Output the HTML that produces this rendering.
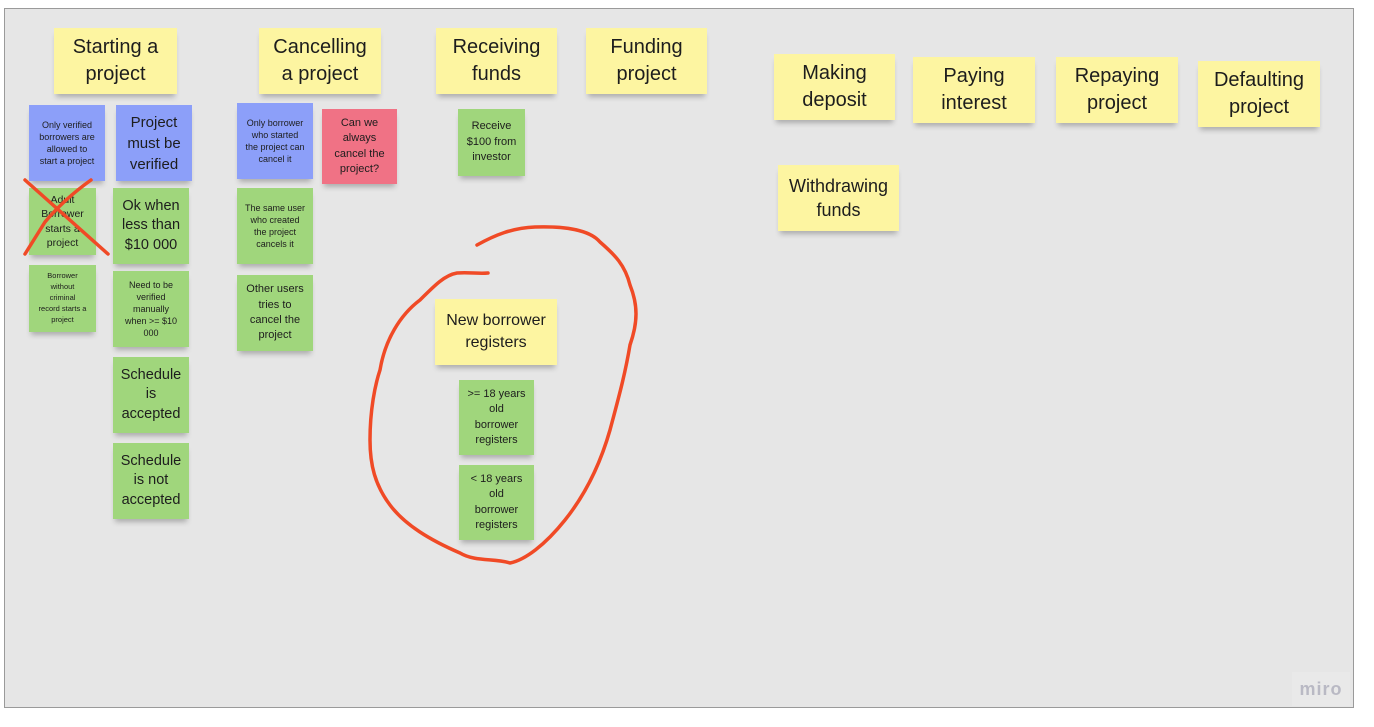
<!DOCTYPE html>
<html><head><meta charset="utf-8"><style>
body{margin:0;width:1374px;height:727px;background:#fff;position:relative;overflow:hidden;font-family:"Liberation Sans","DejaVu Sans",sans-serif;}
#board{position:absolute;left:4px;top:8px;width:1348px;height:698px;background:#e6e6e6;border:1px solid #9a9a9a;}
.n{position:absolute;display:flex;align-items:center;justify-content:center;text-align:center;color:#1d1d1d;box-shadow:0 5px 5px -2px rgba(0,0,0,0.25);line-height:1.35;box-sizing:border-box;padding:2px;white-space:nowrap;}
.y{background:#fdf5a1;font-size:20px;line-height:1.35;}
.b{background:#8c9ff9;}
.g{background:#a0d67c;}
.r{background:#f07285;}
.miro{position:absolute;left:1292px;top:672px;width:58px;height:34px;background:#e9e9e9;color:#b9b9c4;font-size:18px;font-weight:bold;letter-spacing:1px;text-align:center;line-height:34px;}
</style></head><body>
<div id="board"></div>
<div class="n y" style="left:54px;top:28px;width:123px;height:66px">Starting a<br>project</div>
<div class="n y" style="left:259px;top:28px;width:122px;height:66px">Cancelling<br>a project</div>
<div class="n y" style="left:436px;top:28px;width:121px;height:66px">Receiving<br>funds</div>
<div class="n y" style="left:586px;top:28px;width:121px;height:66px">Funding<br>project</div>
<div class="n y" style="left:774px;top:54px;width:121px;height:66px">Making<br>deposit</div>
<div class="n y" style="left:913px;top:57px;width:122px;height:66px">Paying<br>interest</div>
<div class="n y" style="left:1056px;top:57px;width:122px;height:66px">Repaying<br>project</div>
<div class="n y" style="left:1198px;top:61px;width:122px;height:66px">Defaulting<br>project</div>
<div class="n y" style="left:778px;top:165px;width:121px;height:66px;font-size:18px">Withdrawing<br>funds</div>
<div class="n y" style="left:435px;top:299px;width:122px;height:66px;font-size:16px">New borrower<br>registers</div>

<div class="n b" style="left:29px;top:105px;width:76px;height:76px;font-size:9px">Only verified<br>borrowers are<br>allowed to<br>start a project</div>
<div class="n b" style="left:116px;top:105px;width:76px;height:76px;font-size:15px;line-height:1.4">Project<br>must be<br>verified</div>
<div class="n g" style="left:29px;top:188px;width:67px;height:67px;font-size:10.5px">Adult<br>Borrower<br>starts a<br>project</div>
<div class="n g" style="left:29px;top:265px;width:67px;height:67px;font-size:7.5px;line-height:1.45">Borrower<br>without<br>criminal<br>record starts a<br>project</div>
<div class="n g" style="left:113px;top:188px;width:76px;height:76px;font-size:14.5px">Ok when<br>less than<br>$10 000</div>
<div class="n g" style="left:113px;top:271px;width:76px;height:76px;font-size:9px">Need to be<br>verified<br>manually<br>when &gt;= $10<br>000</div>
<div class="n g" style="left:113px;top:357px;width:76px;height:76px;font-size:14.5px">Schedule<br>is<br>accepted</div>
<div class="n g" style="left:113px;top:443px;width:76px;height:76px;font-size:14.5px">Schedule<br>is not<br>accepted</div>

<div class="n b" style="left:237px;top:103px;width:76px;height:76px;font-size:9px">Only borrower<br>who started<br>the project can<br>cancel it</div>
<div class="n r" style="left:322px;top:109px;width:75px;height:75px;font-size:11px;line-height:1.4">Can we<br>always<br>cancel the<br>project?</div>
<div class="n g" style="left:237px;top:188px;width:76px;height:76px;font-size:9px">The same user<br>who created<br>the project<br>cancels it</div>
<div class="n g" style="left:237px;top:275px;width:76px;height:76px;font-size:11px;line-height:1.4">Other users<br>tries to<br>cancel the<br>project</div>
<div class="n g" style="left:458px;top:109px;width:67px;height:67px;font-size:11px;line-height:1.4">Receive<br>$100 from<br>investor</div>
<div class="n g" style="left:459px;top:380px;width:75px;height:75px;font-size:11px;line-height:1.4">&gt;= 18 years<br>old<br>borrower<br>registers</div>
<div class="n g" style="left:459px;top:465px;width:75px;height:75px;font-size:11px;line-height:1.4">&lt; 18 years<br>old<br>borrower<br>registers</div>

<svg style="position:absolute;left:0;top:0" width="1374" height="727">
<g fill="none" stroke="#f04a26" stroke-width="3.5" stroke-linecap="round" stroke-linejoin="round">
<path d="M25 180 L108 254"/>
<path d="M91 180 C70 195 55 210 45 222 L25 254"/>
<path d="M477 245 C495 235 512 228 535 227 C565 226 590 230 600 242 C615 255 625 265 630 285 C638 305 638 322 630 345 C625 375 618 400 610 430 C600 465 585 495 565 520 C545 545 525 560 510 563 C495 558 475 562 460 553 C430 540 405 525 390 505 C375 485 370 465 370 440 C370 410 375 385 380 370 C385 340 400 315 420 300 C435 285 445 275 457 273 C470 272 478 274 488 273"/>
</g></svg>
<div class="miro">miro</div>
</body></html>
